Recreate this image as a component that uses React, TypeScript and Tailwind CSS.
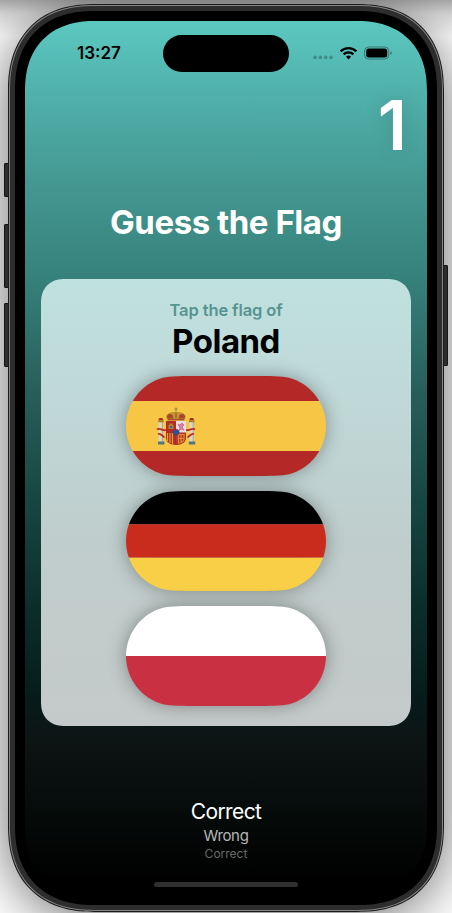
import React from "react";

const CAPSULE =
  "M0 50 C0 27.4 15.2 7.6 37 1.7 C44 0.1 57 0 72 0 H128 C143 0 156 0.1 163 1.7 C184.8 7.6 200 27.4 200 50 C200 72.6 184.8 92.4 163 98.3 C156 99.9 143 100 128 100 H72 C57 100 44 99.9 37 98.3 C15.2 92.4 0 72.6 0 50Z";

function CoatOfArms() {
  return (
    <g>
      {[32, 62.8].map((x) => (
        <g key={x}>
          <rect x={x + 0.6} y="46" width="4.6" height="20" fill="#dcd8c4" />
          <path d={`M${x + 4.4} 46v20`} stroke="#aaa698" strokeWidth="1" />
          <rect x={x} y="65.5" width="6.4" height="3" fill="#4f7779" />
          <rect x={x + 0.3} y="44.2" width="5.4" height="2" fill="#a37a25" />
          <path d={`M${x + 0.4} 44l1-2h3l1 2z`} fill="#a5352a" />
        </g>
      ))}
      <path d="M31 53.5c3-2 6 1.5 9 .5M32 58c3-1 4 2 6.5 3.5M69 53.5c-3-2-6 1.5-9 .5M68 58c-3-1-4 2-6.5 3.5" fill="none" stroke="#b52a26" strokeWidth="1.8" />
      <path d="M40 45h20v17c0 4-4 7-10 7s-10-3-10-7z" fill="#b52a29" />
      <path d="M50 45h10v11.5h-10z" fill="#e9dde0" />
      <path d="M52 48l2 1 2-2 2 2-2 2 2 3-3-1-2 2 1-3z" fill="#d581a8" stroke="#c86593" strokeWidth=".8" />
      <path d="M42.5 53v-4h1v-1.5h3V49h1v4z" fill="#a58b31" />
      <path d="M44 50h2v2h-2z" fill="#3d648a" />
      <path d="M41.5 57v8M44 57v10M46.5 57v11.5" stroke="#dba83c" strokeWidth="1.2" />
      <path d="M50 57h9.5v5c0 3.5-3 6-9.5 6.5z" fill="#b13a2b" />
      <path d="M52.5 58.5h5.5v4.5c0 2-2 3.5-5.5 4zM52.5 62.5h5.5M55 58.5v8" fill="none" stroke="#e08a2c" strokeWidth="1.2" />
      <circle cx="50" cy="56.3" r="3.1" fill="#1d579b" stroke="#a62b42" strokeWidth=".7" />
      <path d="M41.5 44.5c-4-7 3-9 8.5-8.5 5.5-.5 12.5 1.5 8.5 8.5z" fill="#c29534" />
      <path d="M42 42.5c-2-4 2-4.5 4-3.5l1 3.5M58 42.5c2-4-2-4.5-4-3.5l-1 3.5M50 37v5" fill="#a84728" stroke="#a84728" strokeWidth="1" />
      <path d="M42 43.7h16" stroke="#a33629" strokeWidth="1" />
      <path d="M50 31.5v5M48.5 33h3" stroke="#8d8145" strokeWidth="1" />
    </g>
  );
}

type Stripe = { y: number; h: number; fill: string };

function Flag({ id, stripes, arms }: { id: string; stripes: Stripe[]; arms?: boolean }) {
  return (
    <button className="block h-[100px] w-[200px] drop-shadow-[0_0_9px_rgba(0,0,0,0.34)]">
      <svg viewBox="0 0 200 100" className="block h-full w-full">
        <clipPath id={id}>
          <path d={CAPSULE} />
        </clipPath>
        <g clipPath={`url(#${id})`}>
          {stripes.map((s) => (
            <rect key={s.y} y={s.y} width="200" height={s.h} fill={s.fill} />
          ))}
          {arms && <CoatOfArms />}
        </g>
      </svg>
    </button>
  );
}

function StatusBar() {
  return (
    <div className="relative h-[64px] shrink-0 text-black">
      <div className="absolute left-[52px] top-[22px] text-[17px] font-semibold leading-[21px]">13:27</div>
      <div className="absolute left-[138px] top-[14px] h-[37px] w-[126px] rounded-full bg-black" />
      <svg className="absolute left-[286px] top-[22px]" width="84" height="20" viewBox="0 0 84 20">
        {[4, 9.4, 14.7, 20].map((x) => (
          <circle key={x} cx={x} cy="14.4" r="1.8" fill="#000" opacity=".25" />
        ))}
        <g fill="none" stroke="#000" strokeWidth="2.3">
          <path d="M29.6 8.4a11.4 11.4 0 0 1 15.8 0" />
          <path d="M32.6 11.4a7.1 7.1 0 0 1 9.8 0" />
        </g>
        <path d="M37.5 16.4l-2.500-2.700a3.6 3.6 0 0 1 5 0z" />
        <rect x="53.7" y="4" width="24" height="12" rx="3.8" fill="none" stroke="#000" strokeOpacity=".38" />
        <rect x="55.2" y="5.5" width="21" height="9" rx="2.5" />
        <path d="M79.3 8.200c2 .6 2 3.2 0 3.8z" opacity=".4" />
      </svg>
    </div>
  );
}

const SIDE_BUTTONS = [
  { key: "action", cls: "left-[4px] top-[163px] h-[34px]" },
  { key: "up", cls: "left-[4px] top-[224px] h-[64px]" },
  { key: "down", cls: "left-[4px] top-[303px] h-[64px]" },
  { key: "power", cls: "left-[442px] top-[265px] h-[101px]" },
];

export default function App() {
  return (
    <div className="relative isolate flex h-[913px] w-[452px] justify-center overflow-hidden bg-white bg-[linear-gradient(180deg,#a8a8a8_0px,#d8d8d8_14px,#fff_36px)] pt-1 font-['Inter','Liberation_Sans',sans-serif]">
      <div className="absolute left-[8px] top-[4px] -z-10 h-[908px] w-[436px] rounded-[86px] shadow-[0_8px_56px_rgba(0,0,0,0.6)]" />
      {SIDE_BUTTONS.map((b) => (
        <div key={b.key} className={`absolute w-[6px] rounded-[1px] border border-[#151515] bg-[#2d2d2d] ${b.cls}`} />
      ))}
      <div className="relative h-[908px] w-[436px] rounded-[86px] [corner-shape:superellipse(1.2)] bg-[#1c1c1c] p-px">
        <div className="h-full rounded-[85px] [corner-shape:superellipse(1.2)] bg-[#858585] p-px">
          <div className="h-full rounded-[84px] [corner-shape:superellipse(1.2)] bg-[#2d2d2d] p-[5px]">
            <div className="h-full rounded-[79px] [corner-shape:superellipse(1.2)] bg-black p-[10px]">
              <div className="flex h-full flex-col overflow-hidden rounded-[70px] [corner-shape:superellipse(1.2)] bg-[linear-gradient(180deg,#5bc8c0_0px,#50b0aa_75px,#469b95_150px,#36807a_260px,#285e5a_370px,#174642_480px,#0b2d2a_590px,#061b19_680px,#0d1414_720px,#070d0c_780px,#000_860px)]">
                <StatusBar />
                <div className="h-[84px] shrink-0 pr-[20px] text-right text-[69px] font-semibold leading-[80px] text-white [text-shadow:0_0_20px_rgba(0,0,0,0.15)]">1</div>
                <h1 className="mt-[31px] h-[44px] shrink-0 text-center text-[33px] font-bold leading-[44px] tracking-[-0.45px] text-white">
                  Guess the Flag
                </h1>
                <section className="mx-4 mt-[35px] flex h-[447px] shrink-0 flex-col items-center rounded-[24px] [corner-shape:superellipse(1.2)] bg-[linear-gradient(180deg,#bfe1df_0%,#bfd9d8_25%,#bfcdcc_60%,#c4cac9_100%)] pt-[20px]">
                  <p className="text-[16.5px] font-semibold leading-[22px] tracking-[-0.1px] text-[#56948f]">Tap the flag of</p>
                  <h2 className="text-[33px] font-bold leading-[40px] tracking-[-0.5px] text-black">Poland</h2>
                  <div className="mt-[15px] flex flex-col gap-[15px]">
                    <Flag id="spain" arms stripes={[{ y: 0, h: 25, fill: "#b42928" }, { y: 25, h: 50, fill: "#f7c645" }, { y: 75, h: 25, fill: "#b42928" }]} />
                    <Flag id="germany" stripes={[{ y: 0, h: 33.3, fill: "#000" }, { y: 33.3, h: 33.4, fill: "#c92c1d" }, { y: 66.7, h: 33.3, fill: "#f8cf46" }]} />
                    <Flag id="poland" stripes={[{ y: 0, h: 50, fill: "#fff" }, { y: 50, h: 50, fill: "#c93143" }]} />
                  </div>
                </section>
                <footer className="mt-[72px] flex flex-col items-center">
                  <p className="text-[21px] leading-[28px] tracking-[-0.6px] text-white">Correct</p>
                  <p className="text-[15px] leading-[20px] tracking-[-0.35px] text-[#b6b7b7]">Wrong</p>
                  <p className="text-[12px] leading-[16px] text-[#686969]">Correct</p>
                  <div className="mt-[20px] h-[5px] w-[144px] rounded-full bg-[#303030]" />
                </footer>
              </div>
            </div>
          </div>
        </div>
      </div>
    </div>
  );
}
